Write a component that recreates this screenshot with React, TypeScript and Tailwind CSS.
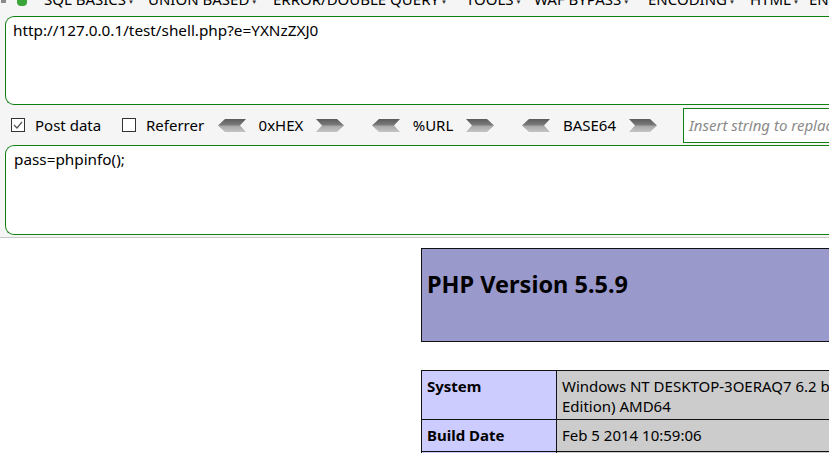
import React from "react";

const ui = { fontFamily: '"Noto Sans", "Open Sans", sans-serif' };

function LeftArrow() {
  return (
    <svg width="28" height="13" viewBox="0 0 28 13" className="shrink-0">
      <defs>
        <linearGradient id="ga" x1="0" y1="0" x2="0" y2="1">
          <stop offset="0" stopColor="#5a5a5a" />
          <stop offset="0.45" stopColor="#7a7a7a" />
          <stop offset="0.55" stopColor="#a8a8a8" />
          <stop offset="1" stopColor="#c4c4c4" />
        </linearGradient>
      </defs>
      <polygon points="0,6.5 7,0 28,0 22,6.5 28,13 7,13" fill="url(#ga)" />
    </svg>
  );
}

function RightArrow() {
  return (
    <svg width="28" height="13" viewBox="0 0 28 13" className="shrink-0">
      <defs>
        <linearGradient id="gb" x1="0" y1="0" x2="0" y2="1">
          <stop offset="0" stopColor="#5a5a5a" />
          <stop offset="0.45" stopColor="#7a7a7a" />
          <stop offset="0.55" stopColor="#a8a8a8" />
          <stop offset="1" stopColor="#c4c4c4" />
        </linearGradient>
      </defs>
      <polygon points="0,0 21,0 28,6.5 21,13 0,13 6,6.5" fill="url(#gb)" />
    </svg>
  );
}

function Encoder({ label, w, mr }: { label: string; w: string; mr: string }) {
  return (
    <div className={`flex items-center shrink-0 ${mr}`}>
      <LeftArrow />
      <span className={`${w} text-center text-black`}>{label}</span>
      <RightArrow />
    </div>
  );
}

function Check({ checked }: { checked?: boolean }) {
  return (
    <span className="w-[14px] h-[14px] border border-[#333] bg-white flex items-center justify-center shrink-0">
      {checked && (
        <svg width="10" height="8" viewBox="0 0 10 8">
          <polyline points="1,4 4,7 9,1" fill="none" stroke="#555" strokeWidth="1.2" />
        </svg>
      )}
    </span>
  );
}

const menu: [string, string][] = [
  ["SQL BASICS", "w-[104px]"],
  ["UNION BASED", "w-[125px]"],
  ["ERROR/DOUBLE QUERY", "w-[193px]"],
  ["TOOLS", "w-[68px]"],
  ["WAF BYPASS", "w-[114px]"],
  ["ENCODING", "w-[102px]"],
  ["HTML", "w-[59px]"],
  ["ENCRYPTION", "w-[120px]"],
];

export default function App() {
  return (
    <div className="w-[829px] h-[453px] overflow-hidden bg-white" style={ui}>
      <div className="bg-[#f5f5f5] border-b border-[#c8c8c8]">
        {/* menu */}
        <div className="h-[16px] overflow-hidden relative">
          <span className="absolute left-[1px] top-0 w-[5px] h-[3px] bg-[#8a8a8a]" />
          <span className="absolute left-[17px] top-0 w-[10px] h-[6px] rounded-b-[4px] bg-[#3aa63a]" />
          <div className="flex -mt-[11px] pl-[44px] whitespace-nowrap text-[15px] leading-[20px] text-black">
            {menu.map(([t, w]) => (
              <span key={t} className={`${w} shrink-0 flex items-start`}>
                {t}
                <span className="text-[6px] ml-[2px] leading-none mt-[10px] text-[#333]">▼</span>
              </span>
            ))}
          </div>
        </div>
        {/* URL */}
        <div className="pl-[5px]">
          <div className="h-[89px] border border-r-0 border-[#108010] rounded-l-[9px] bg-white pl-[7px] pt-[3px] text-[15.3px] text-black leading-[20px]">
            http://127.0.0.1/test/shell.php?e=YXNzZXJ0
          </div>
        </div>
        {/* options row */}
        <div className="h-[40px] flex items-center text-[15px] text-black whitespace-nowrap">
          <div className="ml-[11px] flex items-center shrink-0">
            <Check checked />
            <span className="ml-[10px] w-[87px]">Post data</span>
          </div>
          <div className="flex items-center shrink-0">
            <Check />
            <span className="ml-[10px] w-[72px]">Referrer</span>
          </div>
          <Encoder label="0xHEX" w="w-[70px]" mr="mr-[28px]" />
          <Encoder label="%URL" w="w-[66px]" mr="mr-[28px]" />
          <Encoder label="BASE64" w="w-[79px]" mr="mr-[26px]" />
          <div className="flex-1 h-[35px] border border-r-0 border-[#108010] bg-white flex items-center pl-[5px] italic text-[#8a8a8a] overflow-hidden">
            Insert string to replace
          </div>
        </div>
        {/* post data */}
        <div className="pl-[5px] pb-[2px]">
          <div className="h-[90px] border border-r-0 border-[#108010] rounded-l-[9px] bg-white pl-[8px] pt-[3px] text-[15.3px] text-black leading-[20px]">
            pass=phpinfo();
          </div>
        </div>
      </div>

      {/* page content */}
      <div className="ml-[421px] pt-[10px]">
        <div className="h-[94px] border border-r-0 border-[#111] bg-[#9999cc] pl-[5px] pt-[20px]">
          <div className="text-[23.5px] font-bold text-black leading-[30px]">PHP Version 5.5.9</div>
        </div>
        <div className="mt-[28px] border-t border-l border-[#111] text-[15px] text-black leading-[20px]">
          <div className="flex border-b border-[#111]">
            <div className="w-[135px] shrink-0 bg-[#ccccff] font-bold px-[5px] pt-[5px] h-[48px] border-r border-[#111]">System</div>
            <div className="flex-1 bg-[#cccccc] px-[5px] pt-[5px] whitespace-nowrap overflow-hidden">
              Windows NT DESKTOP-3OERAQ7 6.2 build 9200 (Windows 8 Business
              <br />
              Edition) AMD64
            </div>
          </div>
          <div className="flex border-b border-[#111]">
            <div className="w-[135px] shrink-0 bg-[#ccccff] font-bold px-[5px] pt-[5px] h-[31px] border-r border-[#111]">Build Date</div>
            <div className="flex-1 bg-[#cccccc] px-[5px] pt-[5px] whitespace-nowrap overflow-hidden">Feb 5 2014 10:59:06</div>
          </div>
          <div className="flex">
            <div className="w-[135px] shrink-0 bg-[#ccccff] font-bold px-[5px] pt-[5px] h-[40px] border-r border-[#111]">Compiler</div>
            <div className="flex-1 bg-[#cccccc] px-[5px] pt-[5px] whitespace-nowrap overflow-hidden">MSVC11 (Visual C++ 2012)</div>
          </div>
        </div>
      </div>
    </div>
  );
}
